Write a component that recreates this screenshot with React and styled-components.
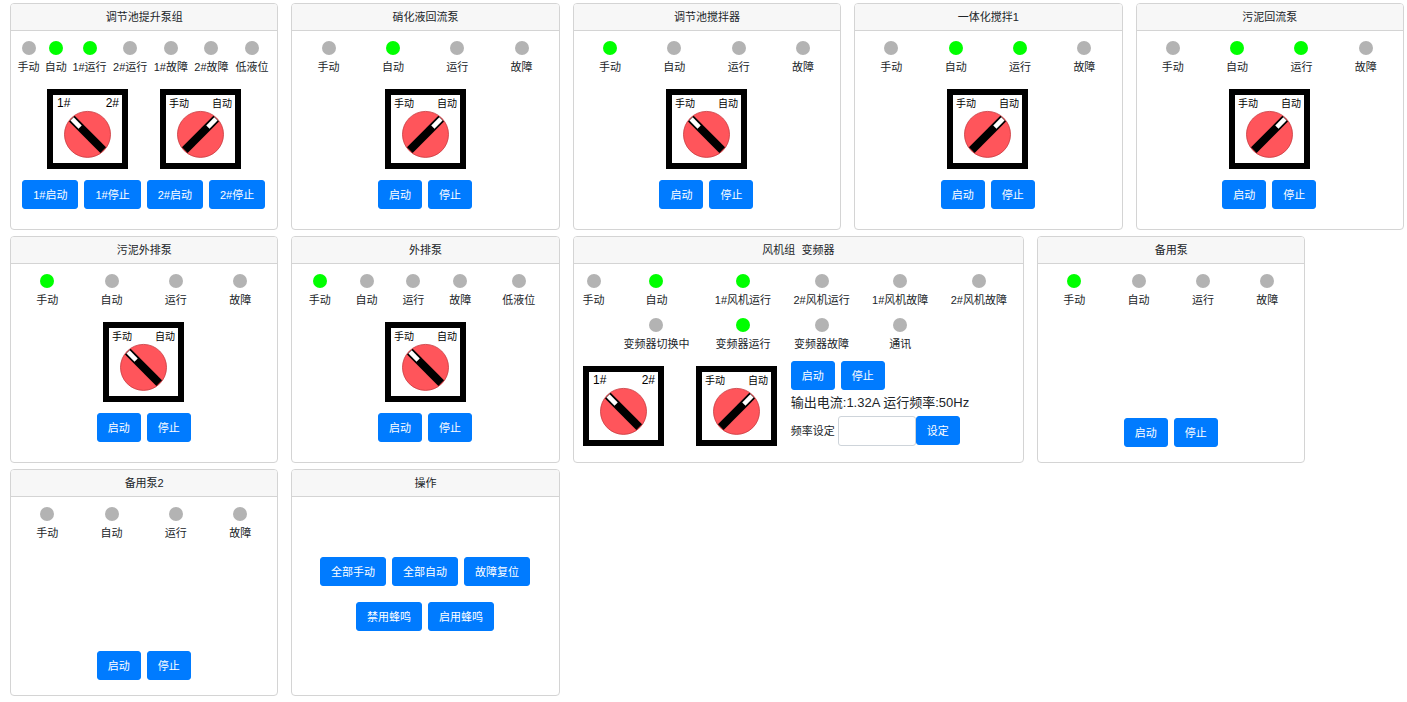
import React from 'react';
import styled, { createGlobalStyle } from 'styled-components';

const GlobalStyle = createGlobalStyle`
  * {
    box-sizing: border-box;
  }
  body {
    margin: 0;
    background: #fff;
    color: #212529;
    font-family: 'Liberation Sans', 'Noto Sans CJK SC', sans-serif;
    font-size: 11px;
    line-height: 16px;
  }
`;

const Board = styled.main`
  display: flex;
  flex-wrap: wrap;
`;

const Cell = styled.div`
  display: flex;
  flex: 0 0 ${props => (props.$wide ? '33%' : '20%')};
  padding: 3px 3px 3px 10px;
`;

const Card = styled.section`
  display: flex;
  flex-direction: column;
  flex: 1;
  min-width: 0;
  min-height: 227px;
  border: 1px solid #d4d4d4;
  border-radius: 4px;
  overflow: hidden;
`;

const Title = styled.h2`
  margin: 0;
  padding: 5px 0;
  background: #f7f7f7;
  border-bottom: 1px solid #d4d4d4;
  font-size: 11px;
  font-weight: normal;
  text-align: center;
  white-space: pre;
`;

const Body = styled.div`
  display: flex;
  flex-direction: column;
  flex: 1;
  padding: 10px 5px 15px 4px;
`;

// columns share the width in proportion to their longest label
const Lamps = styled.div`
  display: grid;
  grid-template-columns: ${props => props.$columns.map(n => `minmax(0, ${n}fr)`).join(' ')};
  row-gap: 10px;
`;

const Lamp = styled.div`
  display: flex;
  flex-direction: column;
  align-items: center;
  gap: 4px;
  white-space: nowrap;
  &::before {
    content: '';
    width: 14px;
    height: 14px;
    border-radius: 50%;
    background: ${props => (props.$on ? '#00ff00' : '#b3b3b3')};
  }
`;

const Knobs = styled.div`
  display: flex;
  justify-content: center;
  gap: 32px;
  margin-top: ${props => (props.$inline ? 0 : '14px')};
`;

const KnobSvg = styled.svg`
  display: block;
  width: 81px;
  height: 80px;
  text {
    font-family: 'Liberation Sans', 'Noto Sans CJK SC', sans-serif;
    fill: #000;
  }
`;

const Buttons = styled.div`
  display: flex;
  justify-content: center;
  gap: 6px;
  margin-top: ${props => (props.$bottom ? 'auto' : '11px')};
`;

const Button = styled.button`
  height: 29px;
  padding: 0 10px;
  border: 1px solid #007bff;
  border-radius: 3px;
  background: #007bff;
  color: #fff;
  font: inherit;
  white-space: nowrap;
  cursor: pointer;
  &:hover {
    background: #0069d9;
  }
`;

const FanPanel = styled.div`
  display: flex;
  align-items: flex-end;
  gap: 14px;
  margin-top: 9px;
  padding-left: 5px;
`;

const FanButtons = styled.div`
  display: flex;
  gap: 6px;
`;

const Reading = styled.p`
  margin: 0;
  font-family: 'Liberation Sans', 'Noto Sans CJK SC', sans-serif;
  font-size: 13px;
  line-height: 26px;
  white-space: nowrap;
`;

const FrequencyForm = styled.form`
  display: flex;
  label {
    margin-right: 3px;
    line-height: 30px;
    white-space: nowrap;
  }
`;

const FrequencyInput = styled.input`
  width: 78px;
  height: 30px;
  padding: 4px 8px;
  border: 1px solid #ced4da;
  border-radius: 3px;
  font: inherit;
`;

const Operations = styled.div`
  display: flex;
  flex-direction: column;
  flex: 1;
  justify-content: center;
  gap: 5px;
  padding-bottom: 10px;
`;

const MODE_LABELS = ['手动', '自动'];
const PUMP_LABELS = ['1#', '2#'];

const Knob = ({ labels = MODE_LABELS, right }) => {
  const small = labels === MODE_LABELS;
  const size = small ? 10 : 12;
  return (
    <KnobSvg viewBox="0 0 81 80" role="img" aria-label={`${labels.join('/')}: ${labels[right ? 1 : 0]}`}>
      <rect width="81" height="80" fill="#000" />
      <rect x="6" y="6" width="69" height="68" fill="#fff" />
      <text x={small ? 9 : 10} y="18" fontSize={size}>
        {labels[0]}
      </text>
      <text x="72" y="18" fontSize={size} textAnchor="end">
        {labels[1]}
      </text>
      <circle cx="40.5" cy="45.4" r="23" fill="#ff555b" stroke="#c8373c" strokeWidth="0.8" />
      <g transform={`rotate(${right ? 45 : -45} 40.5 45.4)`}>
        <rect x="36.5" y="23.2" width="8" height="44.4" fill="#000" />
        <rect x="38.2" y="23.6" width="4.6" height="11.4" fill="#fff" />
      </g>
    </KnobSvg>
  );
};

const LampRow = ({ labels, on = [], columns }) => (
  <Lamps $columns={columns || labels.map(() => 1)}>
    {labels.map((label, i) =>
      label ? (
        <Lamp key={label} $on={on.includes(label)}>
          {label}
        </Lamp>
      ) : (
        <span key={i} />
      )
    )}
  </Lamps>
);

const Panel = ({ title, wide, children }) => (
  <Cell $wide={wide}>
    <Card>
      <Title>{title}</Title>
      <Body>{children}</Body>
    </Card>
  </Cell>
);

const PUMP_LAMPS = ['手动', '自动', '运行', '故障'];

const Pump = ({ title, on, auto, labels = PUMP_LAMPS, columns, noKnob }) => (
  <Panel title={title}>
    <LampRow labels={labels} on={on} columns={columns} />
    {!noKnob && (
      <Knobs>
        <Knob right={auto} />
      </Knobs>
    )}
    <Buttons $bottom={noKnob}>
      <Button type="button">启动</Button>
      <Button type="button">停止</Button>
    </Buttons>
  </Panel>
);

const LiftPumps = () => (
  <Panel title="调节池提升泵组">
    <LampRow
      labels={['手动', '自动', '1#运行', '2#运行', '1#故障', '2#故障', '低液位']}
      on={['自动', '1#运行']}
      columns={[2, 2, 3, 3, 3, 3, 3]}
    />
    <Knobs>
      <Knob labels={PUMP_LABELS} />
      <Knob right />
    </Knobs>
    <Buttons>
      {['1#启动', '1#停止', '2#启动', '2#停止'].map(label => (
        <Button type="button" key={label}>
          {label}
        </Button>
      ))}
    </Buttons>
  </Panel>
);

const FAN_LAMPS = [
  '手动', '自动', '1#风机运行', '2#风机运行', '1#风机故障', '2#风机故障',
  '', '变频器切换中', '变频器运行', '变频器故障', '通讯', '',
];

const Fans = () => (
  <Panel title="风机组  变频器" wide>
    <LampRow
      labels={FAN_LAMPS}
      on={['自动', '1#风机运行', '变频器运行']}
      columns={[2, 6, 5, 5, 5, 5]}
    />
    <FanPanel>
      <Knobs $inline>
        <Knob labels={PUMP_LABELS} />
        <Knob right />
      </Knobs>
      <div>
        <FanButtons>
          <Button type="button">启动</Button>
          <Button type="button">停止</Button>
        </FanButtons>
        <Reading>输出电流:1.32A 运行频率:50Hz</Reading>
        <FrequencyForm onSubmit={e => e.preventDefault()}>
          <label htmlFor="frequency">频率设定</label>
          <FrequencyInput id="frequency" type="text" />
          <Button type="submit">设定</Button>
        </FrequencyForm>
      </div>
    </FanPanel>
  </Panel>
);

const App = () => (
  <>
    <GlobalStyle />
    <Board>
      <LiftPumps />
      <Pump title="硝化液回流泵" on={['自动']} auto />
      <Pump title="调节池搅拌器" on={['手动']} />
      <Pump title="一体化搅拌1" on={['自动', '运行']} auto />
      <Pump title="污泥回流泵" on={['自动', '运行']} auto />
      <Pump title="污泥外排泵" on={['手动']} />
      <Pump
        title="外排泵"
        on={['手动']}
        labels={[...PUMP_LAMPS, '低液位']}
        columns={[2, 2, 2, 2, 3]}
      />
      <Fans />
      <Pump title="备用泵" on={['手动']} noKnob />
      <Pump title="备用泵2" noKnob />
      <Panel title="操作">
        <Operations>
          <Buttons>
            <Button type="button">全部手动</Button>
            <Button type="button">全部自动</Button>
            <Button type="button">故障复位</Button>
          </Buttons>
          <Buttons>
            <Button type="button">禁用蜂鸣</Button>
            <Button type="button">启用蜂鸣</Button>
          </Buttons>
        </Operations>
      </Panel>
    </Board>
  </>
);

export default App;
